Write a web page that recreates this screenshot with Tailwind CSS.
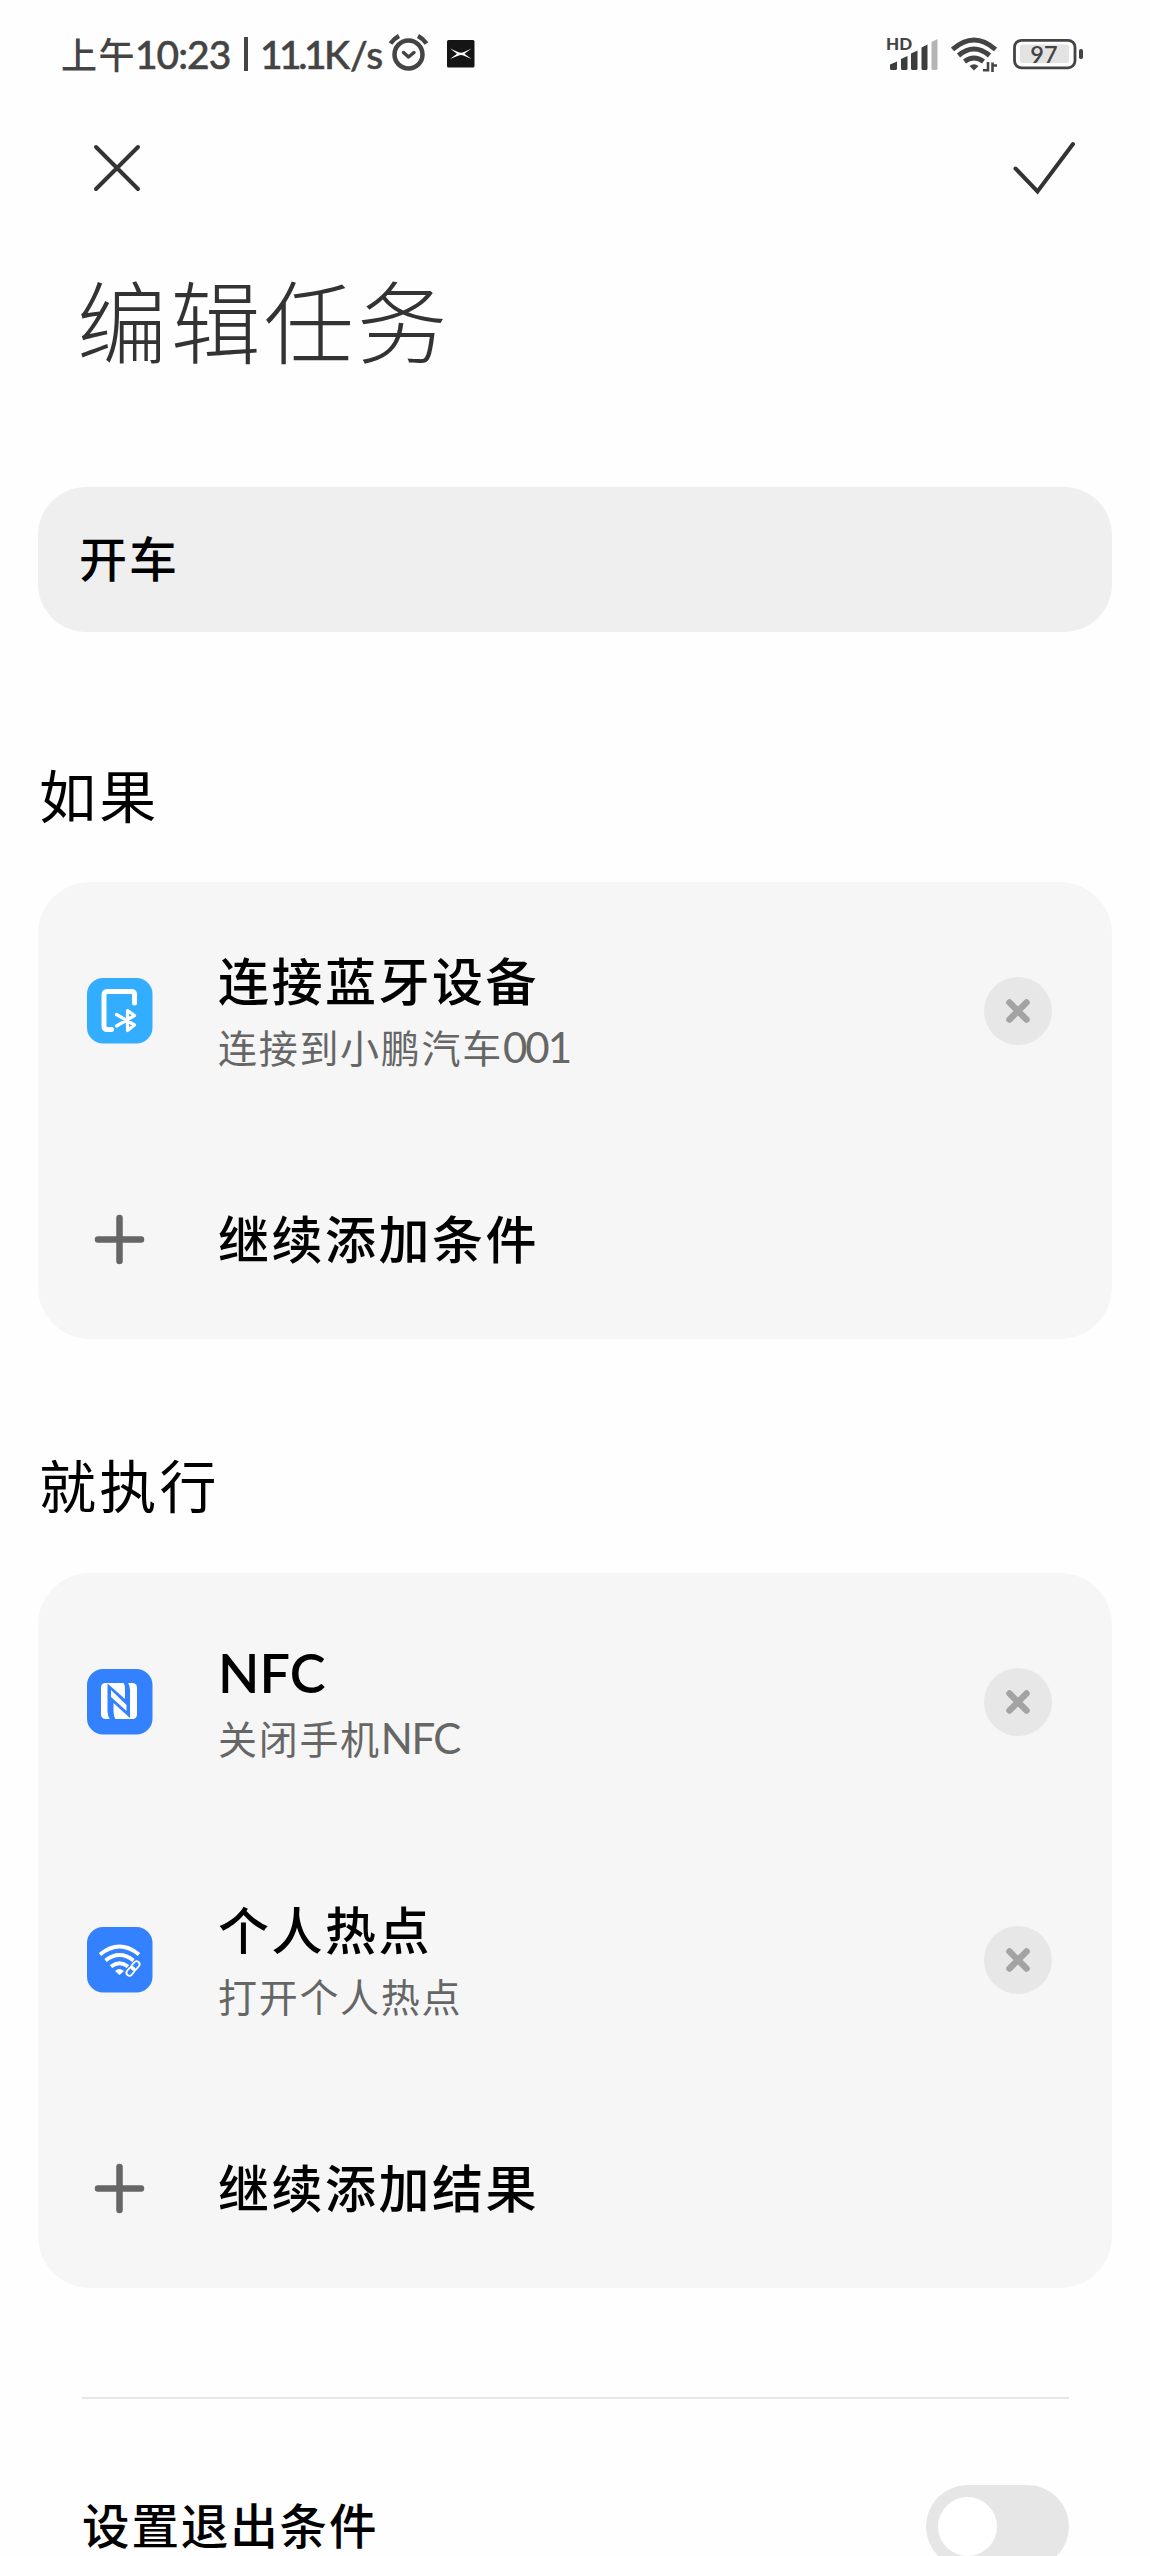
<!DOCTYPE html>
<html lang="zh-CN">
<head>
<meta charset="utf-8">
<title>编辑任务</title>
<script src="https://cdn.jsdelivr.net/npm/@tailwindcss/browser@4"></script>
</head>
<body class="bg-[#fefefe]">
<div class="flex h-[2556px] w-[1150px] flex-col overflow-hidden bg-[#fefefe] font-['Noto_Sans_CJK_SC',sans-serif] text-black">

  <!-- status bar -->
  <header class="flex h-[108px] shrink-0 items-center pl-[61px] pr-[66px] text-[#444]">
    <div class="flex w-[324px] items-center whitespace-nowrap text-[36px] leading-none">
      <span class="w-[74px] pb-[2px] font-medium tracking-[1.5px]">上午</span>
      <span class="flex items-center font-['Lato',sans-serif] text-[39px] font-medium [-webkit-text-stroke:0.5px_#444]">
        <span class="w-[109px] tracking-[-1px]">10:23</span>
        <span class="h-[34px] w-[4px] bg-[#444]"></span>
        <span class="ml-[12px] w-[69px] tracking-[-3.500px]">11.1</span>
        <span class="-ml-[5px]">K/s</span>
      </span>
    </div>
    <svg class="ml-[2px] h-[40px] w-[42px]" viewBox="387 35 42 40" fill="none" stroke="#444" stroke-linecap="round" stroke-linejoin="round">
      <circle cx="408.500" cy="55.500" r="14" stroke-width="4.500"/>
      <path d="M390.500 44.500Q394 39.500 399 37M426.500 44.500Q423 39.500 418 37" stroke-width="4.500" stroke-linecap="butt"/>
      <path d="M403.500 53.500l5 4.500 5.500-4.500" stroke-width="3.500"/>
    </svg>
    <svg class="ml-[18px] h-[28px] w-[28px]" viewBox="0 0 28 28">
      <rect width="27.500" height="27.500" rx="1.500" fill="#151515"/>
      <path d="M3 8.500L11 12q3 1.500 6 0l7.500-3.500-7 5.300 7 5.200-7.500-3.200q-3-1.500-6 0L3 19l7-5.200z" fill="#fff"/>
    </svg>
    <div class="ml-auto flex items-center">
      <div class="relative h-[36px] w-[52px]">
        <span class="absolute -left-px -top-px font-['Lato',sans-serif] text-[17px] font-black leading-[17px]">HD</span>
        <svg class="h-[36px] w-[52px]" viewBox="887 36 52 36" fill="#3c3c3c">
          <path d="M890 64.500l7-3V68.500a1.500 1.500 0 0 1-1.500 1.500H891.500a1.500 1.500 0 0 1-1.500-1.500zM901 59l6.500-3V68.500a1.500 1.500 0 0 1-1.500 1.500H902.500a1.500 1.500 0 0 1-1.500-1.500zM911 53.500l6.500-3V68.500a1.500 1.500 0 0 1-1.500 1.500H912.500a1.500 1.500 0 0 1-1.500-1.500zM921.500 47.500l6-3V68.500a1.500 1.500 0 0 1-1.500 1.500H923a1.500 1.500 0 0 1-1.500-1.500z"/>
          <path d="M931.500 42l6-3V68.500a1.500 1.500 0 0 1-1.500 1.500H933a1.500 1.500 0 0 1-1.500-1.500z" fill="#b5b5b5"/>
        </svg>
      </div>
      <svg class="ml-[12px] h-[38px] w-[48px]" viewBox="951 35 48 38" fill="none" stroke="#444" stroke-width="5">
        <path d="M952.500 49.500Q974 30.500 995.500 49.500"/>
        <path d="M958.500 55.500Q974 42.500 989.500 55.500"/>
        <path d="M964.500 61.500Q974 54.500 983.500 61.500"/>
        <path d="M974 70.500l-4.500-4.500q4.500-3.500 9 0z" fill="#444" stroke="none"/>
        <path d="M988 62v9.500M988 70.300h-5M992.500 72v-9.500M992.500 65.500h4.500" stroke-width="2.600"/>
      </svg>
      <svg class="ml-[13px] h-[32px] w-[72px]" viewBox="1012 38 72 32">
        <rect x="1014.500" y="40.300" width="60.500" height="27.500" rx="7" fill="none" stroke="#444" stroke-width="2.800"/>
        <rect x="1020" y="44.500" width="49" height="18.500" rx="2.500" fill="#e3e3e3"/>
        <rect x="1079" y="49" width="4" height="10" rx="1.800" fill="#444"/>
        <text x="1044" y="62.700" text-anchor="middle" font-family="Lato, sans-serif" font-size="23.500" font-weight="600" fill="#444">97</text>
      </svg>
    </div>
  </header>

  <!-- actions -->
  <nav class="flex h-[120px] shrink-0 items-center justify-between px-[73px]" >
    <svg class="ml-[18px] h-[52px] w-[52px]" viewBox="0 0 52 52" fill="none" stroke="#333" stroke-width="4" stroke-linecap="round"><path d="M5 5L47 47M47 5L5 47"/></svg>
    <svg class="h-[56px] w-[66px]" viewBox="1011 141 66 56" fill="none" stroke="#333" stroke-width="4" stroke-linecap="round"><path d="M1015.500 169.500L1037.500 192.500L1073 145"/></svg>
  </nav>

  <h1 class="mt-[40px] ml-[77px] h-[100px] shrink-0 whitespace-nowrap text-[90px] font-light leading-[100px] tracking-[3.400px] text-[#333]">编辑任务</h1>

  <div class="mx-[38px] mt-[119px] flex h-[145px] shrink-0 items-center rounded-[48px] bg-[#efefef] pb-[7px] pl-[41px] text-[48px] font-medium leading-none tracking-[2px]">开车</div>

  <h2 class="mt-[129px] ml-[39px] h-[64px] shrink-0 text-[57px] leading-[64px] tracking-[3.200px]">如果</h2>

  <section class="mx-[38px] mt-[57px] flex shrink-0 flex-col rounded-[52px] bg-[#f6f6f6]">
    <div class="flex h-[258px] items-center pl-[49px] pr-[60px]">
      <svg class="h-[66px] w-[66px]" viewBox="0 0 66 66" fill="none" stroke="#fff" stroke-linecap="round" stroke-linejoin="round">
        <rect width="65.500" height="65.500" rx="16" fill="#33adff" stroke="none"/>
        <path d="M47.500 25V16.500Q47.500 13.500 44.500 13.500H20.500Q17 13.500 17 17V48Q17 51.500 20.500 51.500H24.500" stroke-width="5"/>
        <path d="M29.500 36.500L47.500 47L40.500 52.500V32.500L47.500 37.500L29.500 48" stroke-width="3.200"/>
      </svg>
      <div class="ml-[65px] flex flex-col whitespace-nowrap pt-[3px]">
        <h3 class="h-[67px] text-[51px] font-medium leading-[67px] tracking-[2.500px]">连接蓝牙设备</h3>
        <p class="h-[67px] text-[39px] leading-[67px] tracking-[1.700px] text-[#666]">连接到小鹏汽车<span class="font-['Lato',sans-serif] text-[42px] tracking-[-2px]">001</span></p>
      </div>
      <svg class="ml-auto h-[68px] w-[68px]" viewBox="0 0 68 68"><circle cx="34" cy="34" r="34" fill="#e7e7e7"/><path d="M25.500 25.500L42.500 42.500M42.500 25.500L25.500 42.500" stroke="#a3a3a3" stroke-width="6.500" stroke-linecap="round"/></svg>
    </div>
    <div class="flex h-[199px] items-center pl-[49px]">
      <svg class="h-[66px] w-[66px]" viewBox="0 0 66 66" stroke="#666" stroke-width="6.500" stroke-linecap="round"><path d="M11 32.500H54M32.500 11V54"/></svg>
      <h3 class="ml-[65px] pb-[5px] text-[51px] font-medium leading-[67px] tracking-[2.500px]">继续添加条件</h3>
    </div>
  </section>

  <h2 class="mt-[112px] ml-[39px] h-[64px] shrink-0 text-[57px] leading-[64px] tracking-[3.200px]">就执行</h2>

  <section class="mx-[38px] mt-[58px] flex shrink-0 flex-col rounded-[52px] bg-[#f6f6f6]">
    <div class="flex h-[258px] items-center pl-[49px] pr-[60px]">
      <svg class="h-[66px] w-[66px]" viewBox="0 0 66 66">
        <rect width="65.500" height="65.500" rx="16" fill="#3381ff"/>
        <rect x="14" y="14" width="36" height="36" rx="4.500" fill="#fff"/>
        <path d="M20.500 14.500L38 30V21Q38 16 36.500 13.500H41Q43 17 43 21V49L26.500 34V42Q26.500 47 28.500 50.500H23Q20.500 47 20.500 42zM24 21V28L39.500 42V36z" fill="#3381ff" fill-rule="evenodd"/>
      </svg>
      <div class="ml-[65px] flex flex-col whitespace-nowrap pt-[3px]">
        <h3 class="h-[67px] pt-[2px] font-['Lato',sans-serif] text-[54px] font-semibold leading-[67px]">NFC</h3>
        <p class="h-[67px] text-[39px] leading-[67px] tracking-[1.700px] text-[#666]">关闭手机<span class="font-['Lato',sans-serif] text-[42px] tracking-[-1.500px]">NFC</span></p>
      </div>
      <svg class="ml-auto h-[68px] w-[68px]" viewBox="0 0 68 68"><circle cx="34" cy="34" r="34" fill="#e7e7e7"/><path d="M25.500 25.500L42.500 42.500M42.500 25.500L25.500 42.500" stroke="#a3a3a3" stroke-width="6.500" stroke-linecap="round"/></svg>
    </div>
    <div class="flex h-[258px] items-center pl-[49px] pr-[60px]">
      <svg class="h-[66px] w-[66px]" viewBox="0 0 66 66" fill="none" stroke="#fff" stroke-width="3.800">
        <rect width="65.500" height="65.500" rx="16" fill="#3381ff" stroke="none"/>
        <path d="M13 27.500Q32.500 11.500 52 27.500"/>
        <path d="M18.500 33.500Q32.500 22.500 46.500 33.500"/>
        <path d="M24 39.500Q32.500 33 41 39.500"/>
        <path d="M32.500 48l-4.500-4q4.500-4 9 0z" fill="#fff" stroke="none"/>
        <g transform="rotate(-50 46 41.500)" stroke-width="1.800"><rect x="37.500" y="38.500" width="9.500" height="6" rx="3"/><rect x="45" y="38.500" width="9.500" height="6" rx="3"/></g>
      </svg>
      <div class="ml-[65px] flex flex-col whitespace-nowrap pt-[3px]">
        <h3 class="h-[67px] text-[51px] font-medium leading-[67px] tracking-[2.500px]">个人热点</h3>
        <p class="h-[67px] text-[39px] leading-[67px] tracking-[1.700px] text-[#666]">打开个人热点</p>
      </div>
      <svg class="ml-auto h-[68px] w-[68px]" viewBox="0 0 68 68"><circle cx="34" cy="34" r="34" fill="#e7e7e7"/><path d="M25.500 25.500L42.500 42.500M42.500 25.500L25.500 42.500" stroke="#a3a3a3" stroke-width="6.500" stroke-linecap="round"/></svg>
    </div>
    <div class="flex h-[199px] items-center pl-[49px]">
      <svg class="h-[66px] w-[66px]" viewBox="0 0 66 66" stroke="#666" stroke-width="6.500" stroke-linecap="round"><path d="M11 32.500H54M32.500 11V54"/></svg>
      <h3 class="ml-[65px] pb-[5px] text-[51px] font-medium leading-[67px] tracking-[2.500px]">继续添加结果</h3>
    </div>
  </section>

  <div class="mt-[109px] ml-[82px] h-[2px] w-[987px] shrink-0 bg-[#e6e6e6]"></div>

  <div class="mt-[86px] flex h-[83px] shrink-0 items-center justify-between pl-[82px] pr-[81px]">
    <span class="pb-[5px] text-[47.500px] font-medium leading-none tracking-[1.900px]">设置退出条件</span>
    <span class="flex h-[83px] w-[143px] items-center rounded-full bg-[#e6e6e6] pl-[12px]"><span class="h-[59px] w-[59px] rounded-full bg-white"></span></span>
  </div>
</div>
</body>
</html>
